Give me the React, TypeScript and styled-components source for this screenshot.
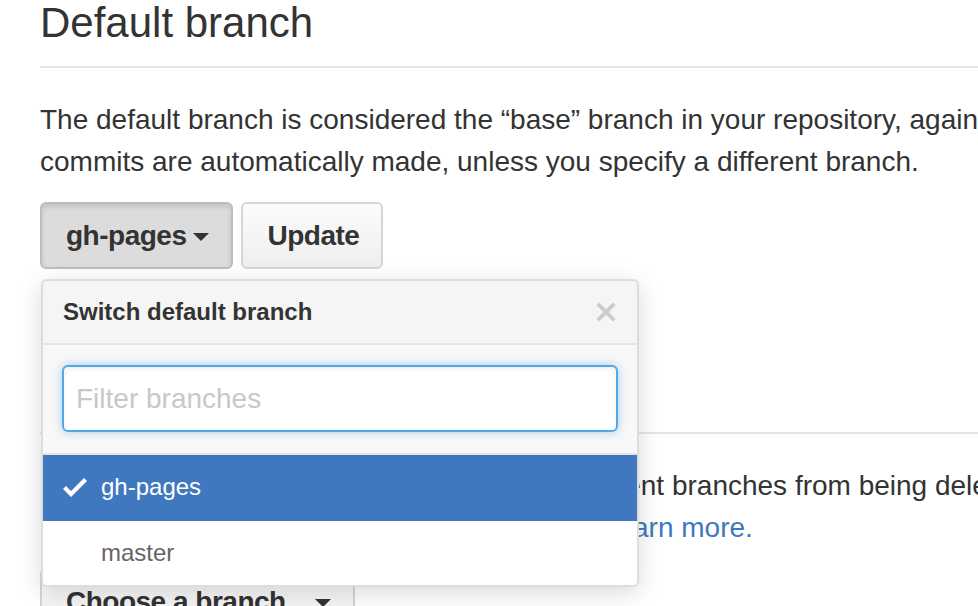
import React from "react";
import styled, { createGlobalStyle } from "styled-components";

const GlobalStyle = createGlobalStyle`
    html, body {
        margin: 0;
        padding: 0;
        background: #fff;
        overflow: hidden;
    }

    body {
        font-family: "Liberation Sans", Helvetica, Arial, sans-serif;
        color: #333;
    }
`

const Page = styled.div`
    width: 1500px;
    padding-left: 40px;
`

const Subhead = styled.div<{ $spaced?: boolean }>`
    margin-top: ${p => p.$spaced ? "97px" : "0"};
    margin-bottom: 31px;
    padding-bottom: 20px;
    border-bottom: 2px solid #e5e5e5;
`

const SubheadHeading = styled.h2`
    margin: 0;
    font-size: 42px;
    font-weight: normal;
    line-height: 46px;
    color: #333;
`

const Text = styled.p`
    margin: 0 0 19px;
    font-size: 28px;
    line-height: 42px;
    white-space: nowrap;
`

const Link = styled.a`
    color: #4078c0;
    text-decoration: none;
`

const ButtonRow = styled.div`
    position: relative;
    display: flex;
    gap: 8px;
`

const Button = styled.button<{ $selected?: boolean }>`
    display: inline-flex;
    align-items: center;
    gap: 7px;
    padding: 12px 22px 12px 24px;
    font-family: inherit;
    font-size: 28px;
    font-weight: bold;
    letter-spacing: -0.5px;
    line-height: 39px;
    color: #333;
    border-radius: 6px;
    border: 2px solid ${p => p.$selected ? "#bdbdbd" : "#d5d5d5"};
    background: ${p => p.$selected ? "#dcdcdc" : "linear-gradient(#fcfcfc, #eee)"};
    box-shadow: ${p => p.$selected ? "inset 0 3px 5px rgba(0,0,0,0.12)" : "none"};
    cursor: pointer;
`

const Caret = styled.span`
    display: inline-block;
    width: 0;
    height: 0;
    margin-top: 2px;
    border-top: 8px solid #333;
    border-left: 8px solid transparent;
    border-right: 8px solid transparent;
`

const Menu = styled.div`
    position: absolute;
    top: calc(100% + 10px);
    left: 1px;
    z-index: 10;
    box-sizing: border-box;
    width: 598px;
    background: #fff;
    border: 2px solid #ddd;
    border-radius: 6px;
    box-shadow: 0 6px 24px rgba(0, 0, 0, 0.15);
    overflow: hidden;
`

const MenuHeader = styled.div`
    display: flex;
    justify-content: space-between;
    align-items: center;
    padding: 16px 20px;
    background: #f5f5f5;
    border-bottom: 2px solid #e5e5e5;
`

const MenuTitle = styled.span`
    font-size: 24px;
    font-weight: bold;
    line-height: 30px;
    color: #333;
`

const CloseIcon = styled.svg`
    display: block;
    fill: #ccc;
`

const MenuFilters = styled.div`
    padding: 20px 19px 21px;
    background: #f8f8f8;
    border-bottom: 2px solid #e5e5e5;
`

const FilterInput = styled.input`
    box-sizing: border-box;
    display: block;
    width: 100%;
    height: 67px;
    padding: 0 12px;
    font-family: inherit;
    font-size: 28px;
    color: #333;
    border: 2px solid #51a7e8;
    border-radius: 6px;
    outline: none;
    background: #fff;
    box-shadow: inset 0 2px 4px rgba(0, 0, 0, 0.075), 0 0 10px rgba(81, 167, 232, 0.5);

    &::placeholder {
        color: #c8c8c8;
    }
`

const MenuItem = styled.div<{ $selected?: boolean }>`
    position: relative;
    padding: 16px 16px 16px 58px;
    font-size: 24px;
    line-height: 32px;
    color: ${p => p.$selected ? "#fff" : "#666"};
    background: ${p => p.$selected ? "#4078c0" : "#fff"};
    border-bottom: 2px solid ${p => p.$selected ? "#4078c0" : "#fff"};

    &:last-child {
        border-bottom: none;
    }
`

const CheckIcon = styled.svg`
    position: absolute;
    left: 20px;
    top: 16px;
    fill: #fff;
`

interface Branch {
    name: string
    selected?: boolean
}

const branches: Branch[] = [
    { name: "gh-pages", selected: true },
    { name: "master" }
]

function BranchMenu() {
    return (
        <Menu>
            <MenuHeader>
                <MenuTitle>Switch default branch</MenuTitle>
                <CloseIcon width="22" height="30" viewBox="0 0 12 16">
                    <path d="M7.48 8l3.75 3.75-1.48 1.48L6 9.48l-3.75 3.75-1.48-1.48L4.52 8 .77 4.25l1.48-1.48L6 6.52l3.75-3.75 1.48 1.48L7.48 8z" />
                </CloseIcon>
            </MenuHeader>
            <MenuFilters>
                <FilterInput placeholder="Filter branches" autoFocus />
            </MenuFilters>
            {branches.map(branch => (
                <MenuItem key={branch.name} $selected={branch.selected}>
                    {branch.selected && (
                        <CheckIcon width="24" height="32" viewBox="0 0 12 16">
                            <path d="M12 5l-8 8-4-4 1.5-1.5L4 10l6.5-6.5L12 5z" />
                        </CheckIcon>
                    )}
                    {branch.name}
                </MenuItem>
            ))}
        </Menu>
    )
}

export default function App() {
    return (
        <Page>
            <GlobalStyle />
            <Subhead>
                <SubheadHeading>Default branch</SubheadHeading>
            </Subhead>
            <Text>
                The default branch is considered the “base” branch in your repository, against which all pull requests and code<br />
                commits are automatically made, unless you specify a different branch.
            </Text>
            <ButtonRow>
                <Button $selected>
                    gh-pages<Caret />
                </Button>
                <Button>Update</Button>
                <BranchMenu />
            </ButtonRow>

            <Subhead $spaced>
                <SubheadHeading>Protected branches</SubheadHeading>
            </Subhead>
            <Text>
                Protect branches to disable force pushing, prevent branches from being deleted, and optionally require status checks<br />
                before merging. New to protected branches? <Link href="#">Learn more.</Link>
            </Text>
            <ButtonRow>
                <Button>
                    Choose a branch...<Caret />
                </Button>
            </ButtonRow>
        </Page>
    );
}
